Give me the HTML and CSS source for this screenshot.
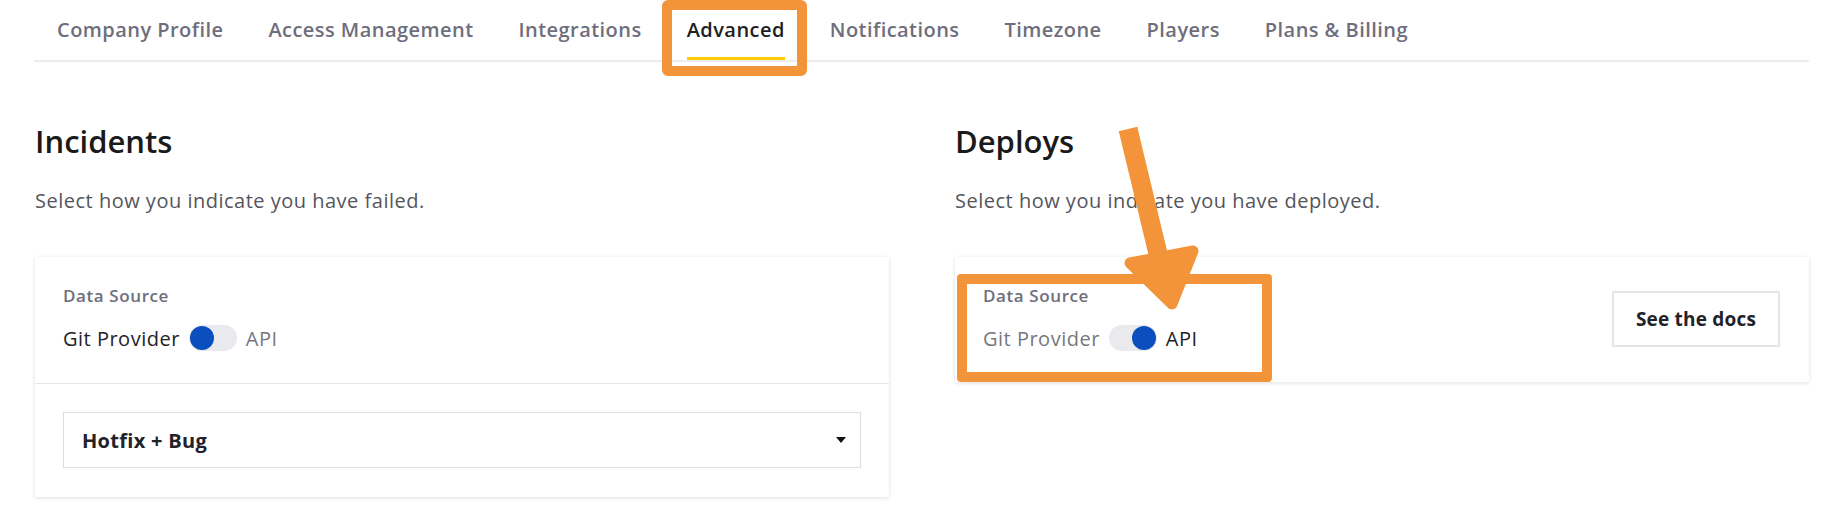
FILE: index.html
```html
<!DOCTYPE html>
<html lang="en">
<head>
    <meta charset="UTF-8">
    <title>Settings - Advanced</title>
    <link rel="stylesheet" href="styles.css">
</head>
<body>

    <!-- Settings tabs -->
    <nav class="tabs">
        <a class="tab">Company Profile</a>
        <a class="tab">Access Management</a>
        <a class="tab">Integrations</a>
        <a class="tab ativo">Advanced</a>
        <a class="tab">Notifications</a>
        <a class="tab">Timezone</a>
        <a class="tab">Players</a>
        <a class="tab">Plans &amp; Billing</a>
    </nav>

    <main class="colunas">
        <!-- Incidents -->
        <section class="secao">
            <h2>Incidents</h2>
            <p class="descricao">Select how you indicate you have failed.</p>
            <div class="card">
                <div class="card-topo">
                    <div class="fonte">
                        <span class="rotulo">Data Source</span>
                        <div class="alternar">
                            <span class="opcao marcada">Git Provider</span>
                            <span class="chave"><span class="bolinha"></span></span>
                            <span class="opcao">API</span>
                        </div>
                    </div>
                </div>
                <div class="card-base">
                    <div class="seletor">
                        <span>Hotfix + Bug</span>
                        <span class="seta"></span>
                    </div>
                </div>
            </div>
        </section>

        <!-- Deploys -->
        <section class="secao">
            <h2>Deploys</h2>
            <p class="descricao">Select how you indicate you have deployed.</p>
            <div class="card">
                <div class="card-topo ultimo">
                    <div class="fonte">
                        <span class="rotulo">Data Source</span>
                        <div class="alternar">
                            <span class="opcao">Git Provider</span>
                            <span class="chave ligada"><span class="bolinha"></span></span>
                            <span class="opcao marcada">API</span>
                        </div>
                    </div>
                    <button class="botao-docs">See the docs</button>
                </div>
            </div>
        </section>
    </main>

    <!-- Highlight marks drawn over the page -->
    <div class="marca marca-aba"></div>
    <div class="marca marca-fonte"></div>
    <svg class="flecha" width="1834" height="530" viewBox="0 0 1834 530">
        <line x1="1128" y1="129" x2="1160" y2="262" stroke="#f3943a" stroke-width="19"/>
        <polygon points="1130,263 1193,251 1172,304" fill="#f3943a" stroke="#f3943a" stroke-width="11" stroke-linejoin="round"/>
    </svg>

</body>
</html>
```

FILE: styles.css
```css
body {
    margin: 0;
    font-family: "Open Sans", Lato, sans-serif;
    background-color: #ffffff;
    color: #1e1e24;
    position: relative;
    height: 530px;
    overflow: hidden;
}

.tabs {
    display: flex;
    margin: 0 25px 0 34px;
    border-bottom: 2px solid #ececf0;
}

.tab {
    margin: 0 22px 0 23px;
    padding: 16px 0 14px;
    font-size: 20px;
    line-height: 27px;
    letter-spacing: 0.45px;
    font-weight: 600;
    color: #6e6e7c;
    border-bottom: 3px solid transparent;
    white-space: nowrap;
}

.tab.ativo {
    color: #1e1e24;
    border-bottom-color: #ffcc00;
}

.colunas {
    display: grid;
    grid-template-columns: 1fr 1fr;
    gap: 66px;
    padding: 0 25px 0 35px;
}

h2 {
    margin: 61px 0 0;
    font-size: 31px;
    line-height: 36px;
    font-weight: 600;
    color: #1a1a1a;
}

.descricao {
    margin: 30px 0 0;
    font-size: 20px;
    line-height: 24px;
    letter-spacing: 0.5px;
    color: #55555c;
}

.card {
    margin-top: 44px;
    background: #ffffff;
    border-radius: 2px;
    box-shadow: 0 1px 4px rgba(0, 0, 0, 0.13);
}

.card-topo {
    display: flex;
    align-items: center;
    justify-content: space-between;
    padding: 28px 29px 30px 28px;
    border-bottom: 1px solid #e6e6eb;
}

.card-topo.ultimo {
    border-bottom: none;
    padding-bottom: 29px;
}

.rotulo {
    display: block;
    font-size: 17px;
    line-height: 22px;
    letter-spacing: 0.6px;
    font-weight: 600;
    color: #6e6e7c;
    margin-bottom: 16px;
}

.alternar {
    display: flex;
    align-items: center;
    gap: 9px;
    height: 30px;
}

.opcao {
    font-size: 20px;
    letter-spacing: 0.5px;
    color: #77777f;
}

.opcao.marcada {
    color: #222228;
}

.chave {
    display: flex;
    align-items: center;
    width: 48px;
    height: 26px;
    border-radius: 13px;
    background: #e9e9ee;
    padding: 0 1px;
    box-sizing: border-box;
}

.chave.ligada {
    justify-content: flex-end;
}

.bolinha {
    width: 24px;
    height: 24px;
    border-radius: 50%;
    background: #0a4fbd;
}

.card-base {
    padding: 28px 28px 29px;
}

.seletor {
    display: flex;
    align-items: center;
    justify-content: space-between;
    height: 56px;
    box-sizing: border-box;
    padding: 0 14px 0 18px;
    border: 1px solid #dcdce3;
    font-size: 20px;
    letter-spacing: 0.3px;
    font-weight: 700;
    color: #222228;
}

.seta {
    width: 0;
    height: 0;
    border-left: 5px solid transparent;
    border-right: 5px solid transparent;
    border-top: 6px solid #111111;
}

.botao-docs {
    width: 168px;
    height: 56px;
    background: #ffffff;
    border: 2px solid #e4e4e9;
    font-family: inherit;
    font-size: 19px;
    letter-spacing: 0.2px;
    font-weight: 700;
    color: #222228;
}

/* orange highlights */
.marca {
    position: absolute;
    border: 10px solid #f3943a;
    border-radius: 6px;
}

.marca-aba {
    left: 662px;
    top: 0;
    width: 125px;
    height: 56px;
}

.marca-fonte {
    left: 957px;
    top: 274px;
    width: 295px;
    height: 88px;
    border-radius: 4px;
}

.flecha {
    position: absolute;
    left: 0;
    top: 0;
}
```
